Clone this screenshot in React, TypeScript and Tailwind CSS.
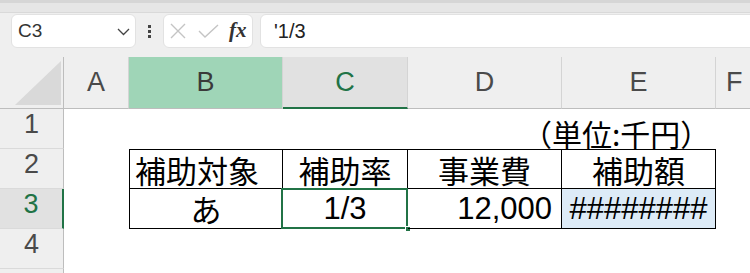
import type { ReactNode } from "react";
import { twMerge } from "tailwind-merge";

const cjk = "font-['Noto_Sans_CJK_JP',sans-serif]";
const num = "font-['Liberation_Sans','Noto_Sans_CJK_JP',sans-serif]";

const ColHead = ({ label, className = "" }: { label: string; className?: string }) => (
  <div
    className={twMerge(
      "flex items-center justify-center border-r border-b border-r-[#d4d4d4] border-b-[#bdbdbd] bg-[#efefef] text-[27px] text-[#4a4a4a]",
      className
    )}
  >
    {label}
  </div>
);

const RowHead = ({ label, className = "" }: { label: string; className?: string }) => (
  <div
    className={twMerge(
      "flex justify-center border-r border-b border-r-[#bdbdbd] border-b-[#dadada] bg-[#efefef] pt-[2px] text-[27px] leading-none text-[#4a4a4a]",
      className
    )}
  >
    {label}
  </div>
);

const Cell = ({ children, className = "" }: { children?: ReactNode; className?: string }) => (
  <div className={twMerge("relative flex items-center border-r border-b border-black text-[31px] leading-none", className)}>
    {children}
  </div>
);

const FormulaBar = () => (
  <div className="flex h-[44px] items-start bg-[#efefef] pt-px pl-[11px]">
    <div className="flex h-[34px] w-[125px] items-center justify-between rounded-[6px] border border-[#e2e2e2] bg-white pr-[5px] pl-[6px]">
      <span className="text-[19px] text-[#333]">C3</span>
      <svg width="13" height="8" viewBox="0 0 13 8" className="mt-[2px]">
        <polyline points="1,1 6.5,6.5 12,1" fill="none" stroke="#444" strokeWidth="1.3" />
      </svg>
    </div>
    <div className="flex h-[34px] w-[27px] flex-col items-center justify-center gap-[2px]">
      <span className="h-[3px] w-[3px] bg-[#444]" />
      <span className="h-[3px] w-[3px] bg-[#444]" />
      <span className="h-[3px] w-[3px] bg-[#444]" />
    </div>
    <div className="flex h-[34px] w-[90px] items-center rounded-[6px] border border-[#e2e2e2] bg-white pl-[6px]">
      <svg width="16" height="16" viewBox="0 0 16 16">
        <path d="M1 1 L15 15 M15 1 L1 15" stroke="#c4c4c4" strokeWidth="1.4" fill="none" />
      </svg>
      <svg width="21" height="14" viewBox="0 0 21 14" className="ml-[12px]">
        <polyline points="1,7 7,13 20,1" stroke="#c4c4c4" strokeWidth="1.4" fill="none" />
      </svg>
      <span className="ml-[10px] font-['Liberation_Serif',serif] text-[21px] font-bold italic text-[#333]">fx</span>
    </div>
    <div className="ml-[7px] -mr-[10px] flex h-[34px] flex-1 items-center rounded-[6px] border border-[#e2e2e2] bg-white pl-[13px]">
      <span className="text-[20px] text-[#222]">'1/3</span>
    </div>
  </div>
);

export default function App() {
  return (
    <div className="h-[273px] w-[750px] overflow-hidden bg-white font-['Liberation_Sans',sans-serif]">
      <div className="h-[13px] border-t-[3px] border-b border-t-[#d6d6d6] border-b-[#d9d9d9] bg-[#e6e6e6]" />
      <FormulaBar />
      <div className="grid grid-cols-[64px_65px_154px_125px_154px_154px_34px] grid-rows-[52px_40px_40px_40px_40px_4px]">
        {/* header row */}
        <div className="flex items-end justify-end border-r border-b border-r-[#bdbdbd] border-b-[#bdbdbd] bg-[#efefef] pr-[2px] pb-[3px]">
          <svg width="46" height="44" viewBox="0 0 46 44">
            <polygon points="46,0 46,44 0,44" fill="#d9d9d9" />
          </svg>
        </div>
        <ColHead label="A" />
        <ColHead label="B" className="bg-[#9fd5b7] text-[#3a3a3a]" />
        <ColHead label="C" className="border-b-2 border-b-[#217346] bg-[#e1e1e1] text-[#217346]" />
        <ColHead label="D" />
        <ColHead label="E" />
        <ColHead label="F" className="justify-start border-r-0 pl-[10px]" />

        {/* row 1 */}
        <RowHead label="1" />
        <div />
        <div />
        <div />
        <div className={`col-span-3 flex items-end justify-start pb-[1px] pl-[114px] ${cjk} text-[30px] leading-none text-black`}>
          （単位:千円）
        </div>

        {/* row 2 */}
        <RowHead label="2" />
        <div />
        <Cell className={`border-t border-l pl-[5px] ${cjk}`}>補助対象</Cell>
        <Cell className={`justify-center border-t ${cjk}`}>補助率</Cell>
        <Cell className={`justify-center border-t ${cjk}`}>事業費</Cell>
        <Cell className={`justify-center border-t ${cjk}`}>補助額</Cell>
        <div />

        {/* row 3 */}
        <RowHead label="3" className="border-r-2 border-r-[#217346] bg-[#e1e1e1] text-[#217346]" />
        <div />
        <Cell className={`justify-center border-l ${cjk}`}>あ</Cell>
        <Cell className={`justify-center ${num}`}>
          1/3
          <div className="absolute -top-px -right-px -bottom-px -left-[2px] border-2 border-[#217346]" />
          <div className="absolute -right-[4px] -bottom-[4px] h-[6px] w-[6px] border border-white bg-[#217346]" />
        </Cell>
        <Cell className={`justify-end pr-[9px] ${num}`}>12,000</Cell>
        <Cell className={`justify-center bg-[#ddebf7] ${num}`}>########</Cell>
        <div />

        {/* row 4 */}
        <RowHead label="4" />
        <div className="col-span-6" />

        {/* row 5 */}
        <RowHead label="5" className="border-b-0" />
        <div className="col-span-6" />
      </div>
    </div>
  );
}
